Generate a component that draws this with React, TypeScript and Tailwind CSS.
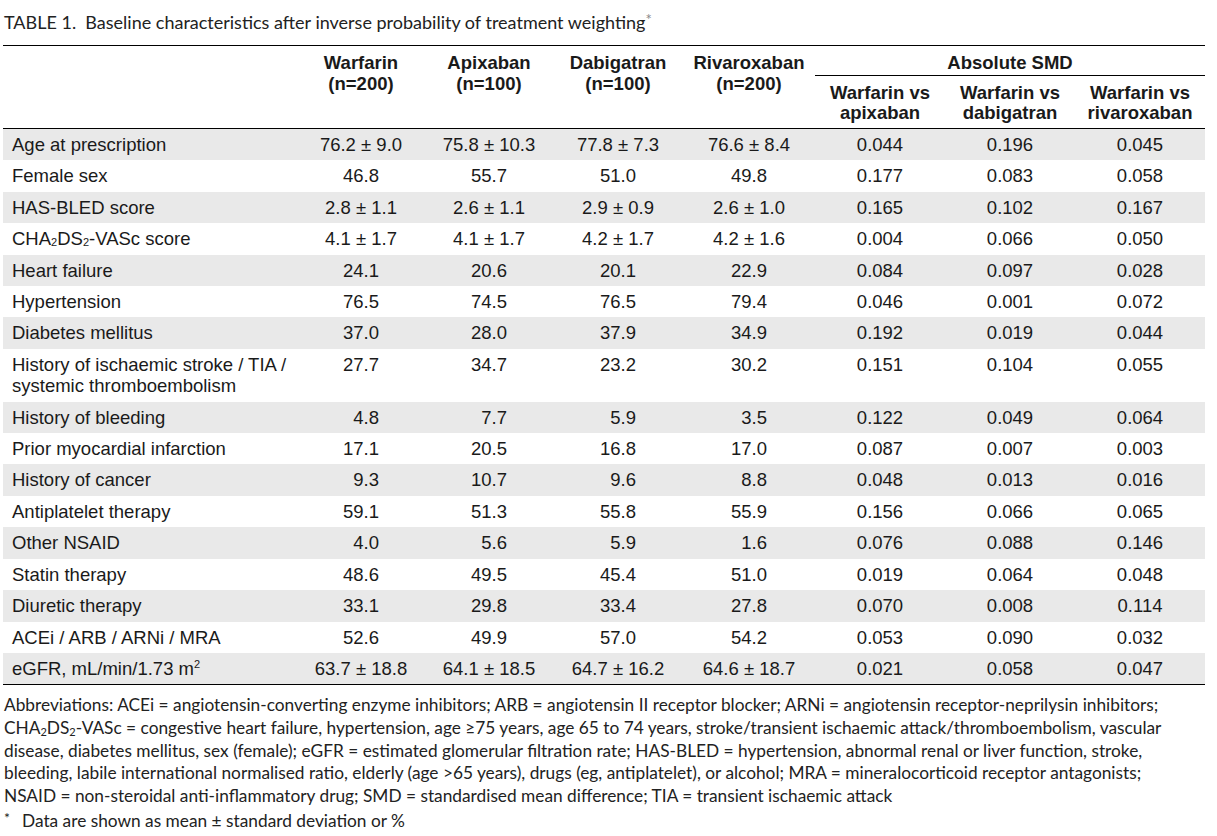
import React from "react";

type Row = { label: React.ReactNode; vals: string[]; smd: string[] };

const sub2 = <sub className="text-[11px] relative top-[1px] align-baseline">2</sub>;

const rows: Row[] = [
  { label: "Age at prescription", vals: ["76.2 ± 9.0", "75.8 ± 10.3", "77.8 ± 7.3", "76.6 ± 8.4"], smd: ["0.044", "0.196", "0.045"] },
  { label: "Female sex", vals: ["46.8", "55.7", "51.0", "49.8"], smd: ["0.177", "0.083", "0.058"] },
  { label: "HAS-BLED score", vals: ["2.8 ± 1.1", "2.6 ± 1.1", "2.9 ± 0.9", "2.6 ± 1.0"], smd: ["0.165", "0.102", "0.167"] },
  { label: <>CHA{sub2}DS{sub2}-VASc score</>, vals: ["4.1 ± 1.7", "4.1 ± 1.7", "4.2 ± 1.7", "4.2 ± 1.6"], smd: ["0.004", "0.066", "0.050"] },
  { label: "Heart failure", vals: ["24.1", "20.6", "20.1", "22.9"], smd: ["0.084", "0.097", "0.028"] },
  { label: "Hypertension", vals: ["76.5", "74.5", "76.5", "79.4"], smd: ["0.046", "0.001", "0.072"] },
  { label: "Diabetes mellitus", vals: ["37.0", "28.0", "37.9", "34.9"], smd: ["0.192", "0.019", "0.044"] },
  { label: <>History of ischaemic stroke / TIA /<br />systemic thromboembolism</>, vals: ["27.7", "34.7", "23.2", "30.2"], smd: ["0.151", "0.104", "0.055"] },
  { label: "History of bleeding", vals: ["4.8", "7.7", "5.9", "3.5"], smd: ["0.122", "0.049", "0.064"] },
  { label: "Prior myocardial infarction", vals: ["17.1", "20.5", "16.8", "17.0"], smd: ["0.087", "0.007", "0.003"] },
  { label: "History of cancer", vals: ["9.3", "10.7", "9.6", "8.8"], smd: ["0.048", "0.013", "0.016"] },
  { label: "Antiplatelet therapy", vals: ["59.1", "51.3", "55.8", "55.9"], smd: ["0.156", "0.066", "0.065"] },
  { label: "Other NSAID", vals: ["4.0", "5.6", "5.9", "1.6"], smd: ["0.076", "0.088", "0.146"] },
  { label: "Statin therapy", vals: ["48.6", "49.5", "45.4", "51.0"], smd: ["0.019", "0.064", "0.048"] },
  { label: "Diuretic therapy", vals: ["33.1", "29.8", "33.4", "27.8"], smd: ["0.070", "0.008", "0.114"] },
  { label: "ACEi / ARB / ARNi / MRA", vals: ["52.6", "49.9", "57.0", "54.2"], smd: ["0.053", "0.090", "0.032"] },
  { label: <>eGFR, mL/min/1.73 m<sup className="text-[11px] relative -top-[7px]">2</sup></>, vals: ["63.7 ± 18.8", "64.1 ± 18.5", "64.7 ± 16.2", "64.6 ± 18.7"], smd: ["0.021", "0.058", "0.047"] },
];

// single-digit plain values get a figure space so the decimal points line up
const pad = (v: string) => (/^\d\.\d$/.test(v) ? "\u2007" + v : v);

const groups = [
  ["Warfarin", "(n=200)"],
  ["Apixaban", "(n=100)"],
  ["Dabigatran", "(n=100)"],
  ["Rivaroxaban", "(n=200)"],
];

const cols = "grid grid-cols-[294px_128px_128px_130px_132px_130px_130px_130px]";
const sub = "text-[11px] relative top-[2px]";

export default function App() {
  return (
    <div className="w-[1217px] h-[836px] bg-white text-[#1a1a1a] overflow-hidden">
      <div className="pl-[4px] pt-[10px] h-[45px] font-['Lato','Open_Sans',sans-serif] text-[18px] leading-[24px] text-[#222] whitespace-nowrap">
        TABLE 1.&nbsp; Baseline characteristics after inverse probability of treatment weighting<span className="text-[#888] relative -top-[4px] text-[15px]">*</span>
      </div>

      <div className="ml-[3px] w-[1202px]">
        {/* header */}
        <div className={`${cols} border-t-[1.5px] border-b-[1.5px] border-black h-[84px] font-['Liberation_Sans',Arial,sans-serif] font-bold text-[18.5px] leading-[21px]`}>
          <div />
          {groups.map(([a, b]) => (
            <div key={a} className="pt-[6px] text-center">
              <div>{a}</div>
              <div>{b}</div>
            </div>
          ))}
          <div className="col-span-3 flex flex-col">
            <div className="pt-[6px] h-[30px] border-b border-black text-center">Absolute SMD</div>
            <div className="grid grid-cols-3 pt-[7px] leading-[20px]">
              <div className="text-center">Warfarin vs<br />apixaban</div>
              <div className="text-center">Warfarin vs<br />dabigatran</div>
              <div className="text-center">Warfarin vs<br />rivaroxaban</div>
            </div>
          </div>
        </div>

        {/* body */}
        <div className="font-['Liberation_Sans',Arial,sans-serif] text-[18.5px] leading-[21.4px] border-b-[1.5px] border-black">
          {rows.map((r, i) => (
            <div key={i} className={`${cols} py-[5px] ${i % 2 === 0 ? "bg-[#e9e9e9]" : "bg-white"}`}>
              <div className="pl-[9px] whitespace-nowrap">{r.label}</div>
              {r.vals.map((v, j) => (
                <div key={j} className="text-center whitespace-pre">{pad(v)}</div>
              ))}
              {r.smd.map((v, j) => (
                <div key={j} className="text-center">{v}</div>
              ))}
            </div>
          ))}
        </div>
      </div>

      <div className="pl-[4px] pt-[9px] font-['Lato','Open_Sans',sans-serif] text-[17.3px] leading-[22.7px] text-[#222] whitespace-nowrap">
        <div>Abbreviations: ACEi = angiotensin-converting enzyme inhibitors; ARB = angiotensin II receptor blocker; ARNi = angiotensin receptor-neprilysin inhibitors;</div>
        <div>CHA<sub className={sub}>2</sub>DS<sub className={sub}>2</sub>-VASc = congestive heart failure, hypertension, age ≥75 years, age 65 to 74 years, stroke/transient ischaemic attack/thromboembolism, vascular</div>
        <div>disease, diabetes mellitus, sex (female); eGFR = estimated glomerular filtration rate; HAS-BLED = hypertension, abnormal renal or liver function, stroke,</div>
        <div>bleeding, labile international normalised ratio, elderly (age &gt;65 years), drugs (eg, antiplatelet), or alcohol; MRA = mineralocorticoid receptor antagonists;</div>
        <div>NSAID = non-steroidal anti-inflammatory drug; SMD = standardised mean difference; TIA = transient ischaemic attack</div>
        <div className="mt-[2px]">
          <span className="relative -top-[4px] text-[14px] inline-block w-[18px]">*</span>Data are shown as mean ± standard deviation or %
        </div>
      </div>
    </div>
  );
}
